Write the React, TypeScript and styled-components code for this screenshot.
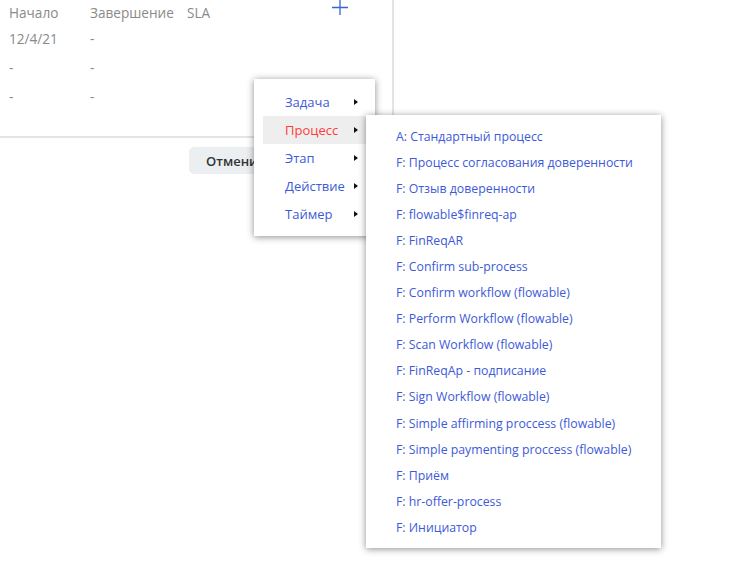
import React from "react";
import styled, { createGlobalStyle } from "styled-components";

const Global = createGlobalStyle`
  html, body { margin: 0; padding: 0; background: #fff; }
  body { font-family: "Open Sans", "Liberation Sans", sans-serif; font-size: 12px; }
`;

const Page = styled.div`
  position: relative;
  width: 731px;
  height: 588px;
  overflow: hidden;
`;

const Panel = styled.div`
  width: 392px;
  height: 136px;
  border-right: 2px solid #e4e4e4;
  border-bottom: 2px solid #e4e4e4;
  box-sizing: content-box;
`;

const Table = styled.div`
  display: grid;
  grid-template-columns: 81px 97px 145px 16px;
  padding-left: 9px;
  color: #8a8a8a;
  font-size: 13.6px;
`;

const HeadCell = styled.div`
  height: 24px;
  display: flex;
  align-items: center;
`;

const Cell = styled.div`
  height: 29px;
  display: flex;
  align-items: center;
`;

const PlusCell = styled.div`
  height: 15px;
  align-self: start;
`;

const Footer = styled.div`
  padding: 9px 0 0 189px;
  display: flex;
`;

const Button = styled.button`
  height: 27px;
  padding: 0 17px;
  border: none;
  border-radius: 5px;
  background: #eceff1;
  color: #333;
  font-family: inherit;
  font-size: 13px;
  font-weight: 600;
`;

const Menu = styled.div<{ $left: number; $top: number; $width: number }>`
  position: absolute;
  left: ${(p) => p.$left}px;
  top: ${(p) => p.$top}px;
  width: ${(p) => p.$width}px;
  background: #fff;
  box-shadow: 0 1px 7px rgba(0, 0, 0, 0.45);
  box-sizing: border-box;
`;

const MainList = styled.div`
  padding: 9px 5px 8px 9px;
  font-size: 13px;
`;

const MainItem = styled.div<{ $active?: boolean }>`
  height: 28px;
  display: flex;
  align-items: center;
  justify-content: space-between;
  padding: 0 12px 0 22px;
  background: ${(p) => (p.$active ? "#eeeeee" : "transparent")};
  color: ${(p) => (p.$active ? "#ff3b3b" : "#3d5ad8")};
`;

const Arrow = styled.span`
  width: 0;
  height: 0;
  border-top: 3.5px solid transparent;
  border-bottom: 3.5px solid transparent;
  border-left: 4px solid #111;
`;

const SubList = styled.div`
  padding: 8px 0 7px 30px;
  font-size: 12.3px;
`;

const SubItem = styled.div`
  height: 26.1px;
  display: flex;
  align-items: center;
  color: #3d5ad8;
  white-space: nowrap;
`;

const mainItems = ["Задача", "Процесс", "Этап", "Действие", "Таймер"];

const subItems = [
  "A: Стандартный процесс",
  "F: Процесс согласования доверенности",
  "F: Отзыв доверенности",
  "F: flowable$finreq-ap",
  "F: FinReqAR",
  "F: Confirm sub-process",
  "F: Confirm workflow (flowable)",
  "F: Perform Workflow (flowable)",
  "F: Scan Workflow (flowable)",
  "F: FinReqAp - подписание",
  "F: Sign Workflow (flowable)",
  "F: Simple affirming proccess (flowable)",
  "F: Simple paymenting proccess (flowable)",
  "F: Приём",
  "F: hr-offer-process",
  "F: Инициатор",
];

export default function App() {
  return (
    <Page>
      <Global />
      <Panel>
        <Table>
          <HeadCell>Начало</HeadCell>
          <HeadCell>Завершение</HeadCell>
          <HeadCell>SLA</HeadCell>
          <PlusCell>
            <svg width="16" height="15" viewBox="0 0 16 15">
              <path d="M8 0v15M0 7.5h16" stroke="#3a62d6" strokeWidth="1.3" fill="none" />
            </svg>
          </PlusCell>
          <Cell>12/4/21</Cell>
          <Cell>-</Cell>
          <Cell />
          <Cell />
          <Cell>-</Cell>
          <Cell>-</Cell>
          <Cell />
          <Cell />
          <Cell>-</Cell>
          <Cell>-</Cell>
          <Cell />
          <Cell />
        </Table>
      </Panel>
      <Footer>
        <Button>Отменить</Button>
      </Footer>
      <Menu $left={254} $top={79} $width={121}>
        <MainList>
          {mainItems.map((m) => (
            <MainItem key={m} $active={m === "Процесс"}>
              <span>{m}</span>
              <Arrow />
            </MainItem>
          ))}
        </MainList>
      </Menu>
      <Menu $left={366} $top={115} $width={295}>
        <SubList>
          {subItems.map((s) => (
            <SubItem key={s}>{s}</SubItem>
          ))}
        </SubList>
      </Menu>
    </Page>
  );
}
